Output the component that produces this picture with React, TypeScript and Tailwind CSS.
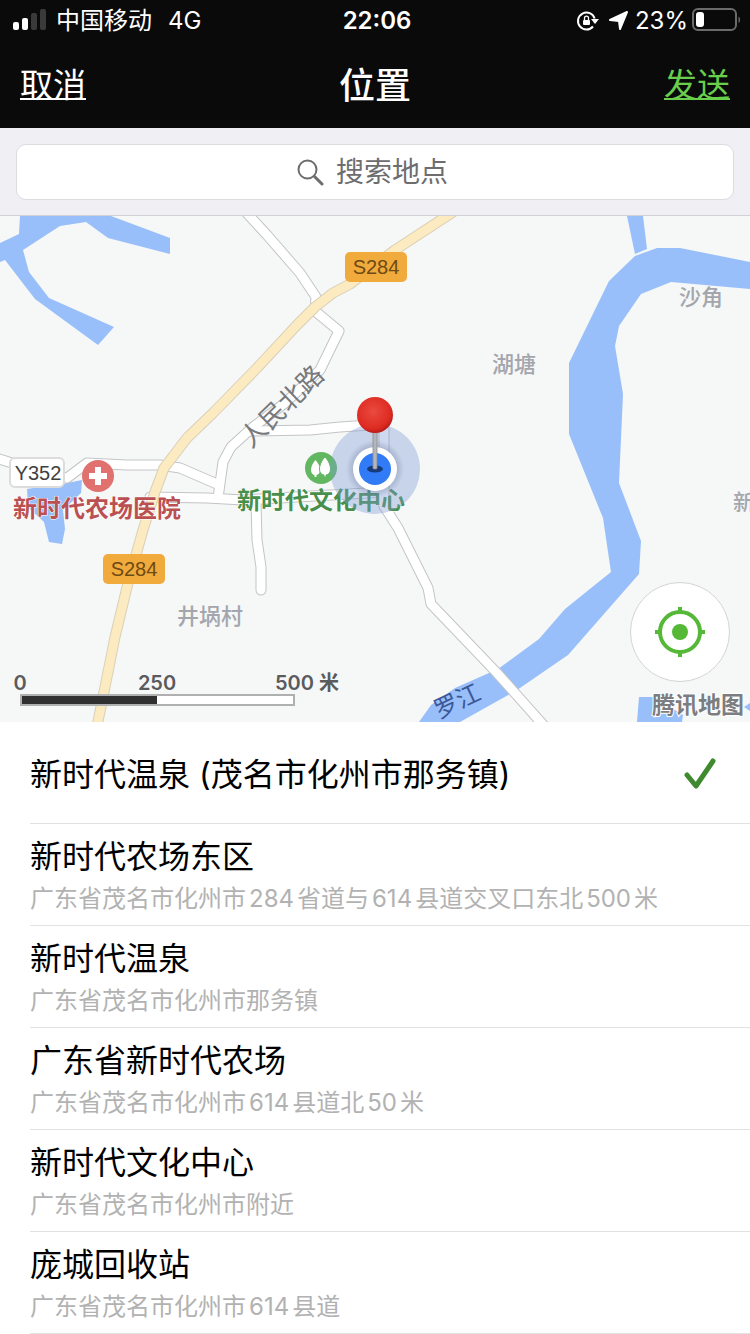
type Place = {
  name: string;
  address?: string;
};

const places: Place[] = [
  { name: "新时代温泉 (茂名市化州市那务镇)" },
  { name: "新时代农场东区", address: "广东省茂名市化州市284省道与614县道交叉口东北500米" },
  { name: "新时代温泉", address: "广东省茂名市化州市那务镇" },
  { name: "广东省新时代农场", address: "广东省茂名市化州市614县道北50米" },
  { name: "新时代文化中心", address: "广东省茂名市化州市附近" },
  { name: "庞城回收站", address: "广东省茂名市化州市614县道" },
];

// minor roads, drawn twice: grey casing first, then the white surface
const roads = [
  "M244 210L267 235L300 273L316 297L315 311L339 331L320 370L285 403L253 427L231 447L223 462L218 498",
  "M250 431L310 430L340 427L384 424L384 506",
  "M-4 458L12 463L40 474L67 478L87 463L127 465L160 465L180 468L217 484",
  "M150 497L207 498L243 500L384 492",
  "M256 502L257 540L261 567L261 590",
  "M384 506L398 528L428 588L431 604L497 673L546 728",
];

const highway =
  "M462 206L447 216L395 250L350 284L333 293L315 307L297 325L257 368L213 413L187 438L164 468L155 492L143 530L128 583L115 637L103 697L97 726";

function StatusBar() {
  return (
    <div className="grid h-10 grid-cols-[1fr_auto_1fr] items-center pl-3 pr-2 pt-0.5 text-2xl">
      <div className="flex items-center">
        <svg className="h-6 w-9" viewBox="0 0 36 24">
          <rect x="1" y="13" width="6" height="8" rx="2" fill="#fff" />
          <rect x="10" y="9" width="6" height="12" rx="2" fill="#fff" />
          <rect x="19" y="4" width="6" height="17" rx="2" fill="#3a3a3a" />
          <rect x="28" y="0" width="6" height="21" rx="2" fill="#3a3a3a" />
        </svg>
        <span className="ml-2">中国移动</span>
        <span className="ml-4">4G</span>
      </div>
      <time className="font-semibold">22:06</time>
      <div className="flex items-center justify-end">
        <svg className="h-6 w-6" viewBox="0 0 24 24" fill="none">
          <path d="M18 17.5A8.5 8.5 0 1 1 19.6 9.5" stroke="#fff" strokeWidth="2" />
          <path d="M16 10h8l-4 5z" fill="#fff" />
          <rect x="8" y="11" width="7" height="5" rx="1" fill="#fff" />
          <path d="M9.5 11V9.2a2 2 0 0 1 4 0V11" stroke="#fff" strokeWidth="1.3" />
        </svg>
        <svg className="ml-2 h-6 w-6" viewBox="0 0 24 24">
          <path d="M20 3L13 20L12 12L3 11Z" fill="#fff" stroke="#fff" strokeWidth="2" strokeLinejoin="round" />
        </svg>
        <span className="ml-1">23%</span>
        <svg className="ml-1 h-6 w-[50px] overflow-visible" viewBox="0 0 50 24" fill="none">
          <rect x="1" y="0" width="43" height="21" rx="5" stroke="#6b6b6b" strokeWidth="2" />
          <rect x="4" y="3" width="8" height="15" rx="3" fill="#fff" />
          <path d="M46.5 7.5c2 1 2 5.5 0 6.5z" fill="#6b6b6b" />
        </svg>
      </div>
    </div>
  );
}

function RoadBadge({ x, y }: { x: number; y: number }) {
  return (
    <g>
      <rect x={x - 31} y={y - 15} width="62" height="30" rx="5" fill="#f0ab3c" />
      <text x={x} y={y + 7} textAnchor="middle" fontSize="20" fill="#6e4a14" className="font-['Liberation_Sans',sans-serif]">
        S284
      </text>
    </g>
  );
}

function MapView() {
  return (
    <div className="relative bg-[#f6f7f7]">
      <svg className="block h-auto w-full" viewBox="0 216 750 506" role="img" aria-label="地图">
        <defs>
          <radialGradient id="pinHead" cx="45%" cy="40%" r="60%">
            <stop offset="0" stopColor="#ea4a40" />
            <stop offset="0.8" stopColor="#de2b22" />
            <stop offset="1" stopColor="#b81d17" />
          </radialGradient>
          <radialGradient id="dotShadow">
            <stop offset="0.7" stopColor="#4a5a80" stopOpacity="0.3" />
            <stop offset="1" stopColor="#4a5a80" stopOpacity="0" />
          </radialGradient>
        </defs>

        {/* water */}
        <g fill="#98bffa">
          <path d="M20 216H111L170 238V254L108 238L86 222L60 226L23 250L29 272L49 298L114 327L98 345L35 299L5 260L0 262V243L19 234Z" />
          <path d="M627 216H643L647 249L635 254Z" />
          <path d="M750 262L680 248H657L635 256L609 281L569 363V434L603 518L611 572L565 609L539 639L498 669L455 688L431 705L419 722H460L517 690L568 655L639 574L641 541L619 483L623 394L615 346L619 326L641 294L671 282L750 289Z" />
          <path d="M639 697H653L683 715L682 722H637Z" />
          <path d="M744 707L750 703V711Z" />
          <path d="M27 489L67 483L82 480L81 493L63 510L65 529L62 544L49 542L44 522L28 507Z" />
        </g>

        {/* roads */}
        <g fill="none" strokeLinejoin="round" strokeLinecap="round">
          {roads.map((d) => (
            <path key={d} d={d} stroke="#c3c4c6" strokeWidth="11" />
          ))}
          {roads.map((d) => (
            <path key={d} d={d} stroke="#fff" strokeWidth="9" />
          ))}
          <path d={highway} stroke="#d9cfb8" strokeWidth="11" />
          <path d={highway} stroke="#fcebc0" strokeWidth="9" />
        </g>

        <RoadBadge x={376} y={267} />
        <RoadBadge x={134} y={569} />
        <rect x="10" y="458" width="54" height="29" rx="5" fill="#fff" stroke="#dcdcdc" strokeWidth="2" />
        <text x="38" y="480" textAnchor="middle" fontSize="20" fill="#3f3f3f" className="font-['Liberation_Sans',sans-serif]">
          Y352
        </text>

        {/* place names */}
        <g fontSize="22" fontWeight="500" fill="#a3a6ad">
          <text x="679" y="305">沙角</text>
          <text x="492" y="372">湖塘</text>
          <text x="177" y="624">井埚村</text>
          <text x="733" y="510">新</text>
        </g>
        <text x="251" y="449" fontSize="26" fill="#77797c" transform="rotate(-44 251 449)">
          人民北路
        </text>
        <text x="439" y="719" fontSize="24" fill="#3c5796" transform="rotate(-25 439 719)">
          罗江
        </text>

        {/* hospital */}
        <circle cx="98" cy="476" r="16" fill="#e0716e" />
        <path d="M95 467h6v6h6v6h-6v6h-6v-6h-6v-6h6z" fill="#fff" />
        <text x="13" y="517" fontSize="24" fontWeight="700" fill="#bb5053" stroke="#fff" strokeWidth="1" paintOrder="stroke">
          新时代农场医院
        </text>

        {/* park */}
        <circle cx="321" cy="468" r="16" fill="#62b860" />
        <path d="M315.500 460C312.500 463 311 467 311 470C311 473 312.500 474.500 314.500 475V477H316.500V475C318.500 474.500 320 473 320 470C320 467 318.500 463 315.500 460Z" fill="#fff" />
        <path d="M325 457C321 461 319.500 466 319.500 469C319.500 473 321.500 474.500 324 475V477H326V475C328.500 474.500 330.500 473 330.500 469C330.500 466 329 461 325 457Z" fill="#fff" stroke="#62b860" strokeWidth="1" />
        <text x="237" y="509" fontSize="24" fontWeight="700" fill="#478f4a" stroke="#fff" strokeWidth="1" paintOrder="stroke">
          新时代文化中心
        </text>

        {/* current position and pin */}
        <circle cx="375" cy="469" r="45" fill="#7f9bd6" fillOpacity="0.38" />
        <circle cx="375" cy="469" r="29" fill="url(#dotShadow)" />
        <circle cx="375" cy="469" r="22" fill="#fff" />
        <circle cx="375" cy="469" r="16" fill="#327bf6" />
        <ellipse cx="375" cy="469" rx="8" ry="3.5" fill="#173a7a" />
        <rect x="373" y="430" width="4" height="39" rx="1" fill="#b5b6ba" stroke="#8a8b90" strokeWidth="0.8" />
        <circle cx="375" cy="415" r="18" fill="url(#pinHead)" />

        {/* scale */}
        <g fontSize="20" fontWeight="600" fill="#5a5b5d" textAnchor="middle">
          <text x="20" y="690">0</text>
          <text x="157" y="690">250</text>
          <text x="307" y="690">500 米</text>
        </g>
        <rect x="21" y="695" width="273" height="10" fill="#fff" stroke="#b0b0b0" strokeWidth="2" />
        <rect x="22" y="696" width="135" height="8" fill="#303030" />

        <text x="652" y="713" fontSize="23" fontWeight="700" fill="#7b7d81" stroke="#fff" strokeWidth="2" paintOrder="stroke">
          腾讯地图
        </text>
      </svg>

      <button
        type="button"
        aria-label="定位"
        className="absolute bottom-10 right-5 flex size-[100px] items-center justify-center rounded-full border border-[#d4d4d6] bg-white"
      >
        <svg className="size-[50px]" viewBox="0 0 50 50" fill="none" stroke="#55b837" strokeWidth="4">
          <circle cx="25" cy="25" r="20" />
          <circle cx="25" cy="25" r="8" fill="#55b837" stroke="none" />
          <path d="M25 0v6M25 44v6M0 25h6M44 25h6" />
        </svg>
      </button>
    </div>
  );
}

export default function App() {
  return (
    <div className="min-h-screen bg-white font-['Inter','Noto_Sans_CJK_SC',sans-serif]">
      <header className="bg-[#0a0a0a] text-white">
        <StatusBar />
        <nav className="flex h-[88px] items-center justify-between px-5 pt-1 text-[33px]">
          <button type="button" className="underline decoration-2 underline-offset-1 [text-decoration-skip-ink:none]">
            取消
          </button>
          <h1 className="text-4xl font-medium">位置</h1>
          <button type="button" className="text-[#68ce4b] underline decoration-2 underline-offset-1 [text-decoration-skip-ink:none]">
            发送
          </button>
        </nav>
      </header>

      <div className="border-b border-[#d2d2d6] bg-[#efeff4] px-4 pb-[15px] pt-4">
        <label className="flex h-14 items-center justify-center gap-3 rounded-[10px] border border-[#dcdce0] bg-white pr-1">
          <svg className="size-7" viewBox="0 0 28 28" fill="none" stroke="#6d6d70" strokeLinecap="round">
            <circle cx="11.5" cy="11.5" r="9" strokeWidth="2" />
            <path d="M18.5 18.5L26 26" strokeWidth="3" />
          </svg>
          <input
            type="text"
            aria-label="搜索地点"
            placeholder="搜索地点"
            className="w-[114px] bg-transparent text-[28px] outline-none placeholder:text-[#6d6d70]"
          />
        </label>
      </div>

      <MapView />

      <ul>
        {places.map((place, i) => (
          <li key={place.name} className="pl-[30px]">
            <button
              type="button"
              className="flex h-[102px] w-full items-center justify-between border-b border-[#e2e2e4] pr-8 pt-1 text-left"
            >
              <span className="flex flex-col">
                <span className="text-[32px] leading-[44px] text-black">{place.name}</span>
                {place.address && (
                  <span className="text-2xl leading-10 text-[#b2b2b2] [text-autospace:normal]">{place.address}</span>
                )}
              </span>
              {i === 0 && (
                <svg className="h-9 w-9" viewBox="0 0 36 36" fill="none" stroke="#3f8a2e" strokeWidth="5" strokeLinecap="round" strokeLinejoin="round">
                  <path d="M5 18L14 29L31 4" />
                </svg>
              )}
            </button>
          </li>
        ))}
      </ul>
    </div>
  );
}
